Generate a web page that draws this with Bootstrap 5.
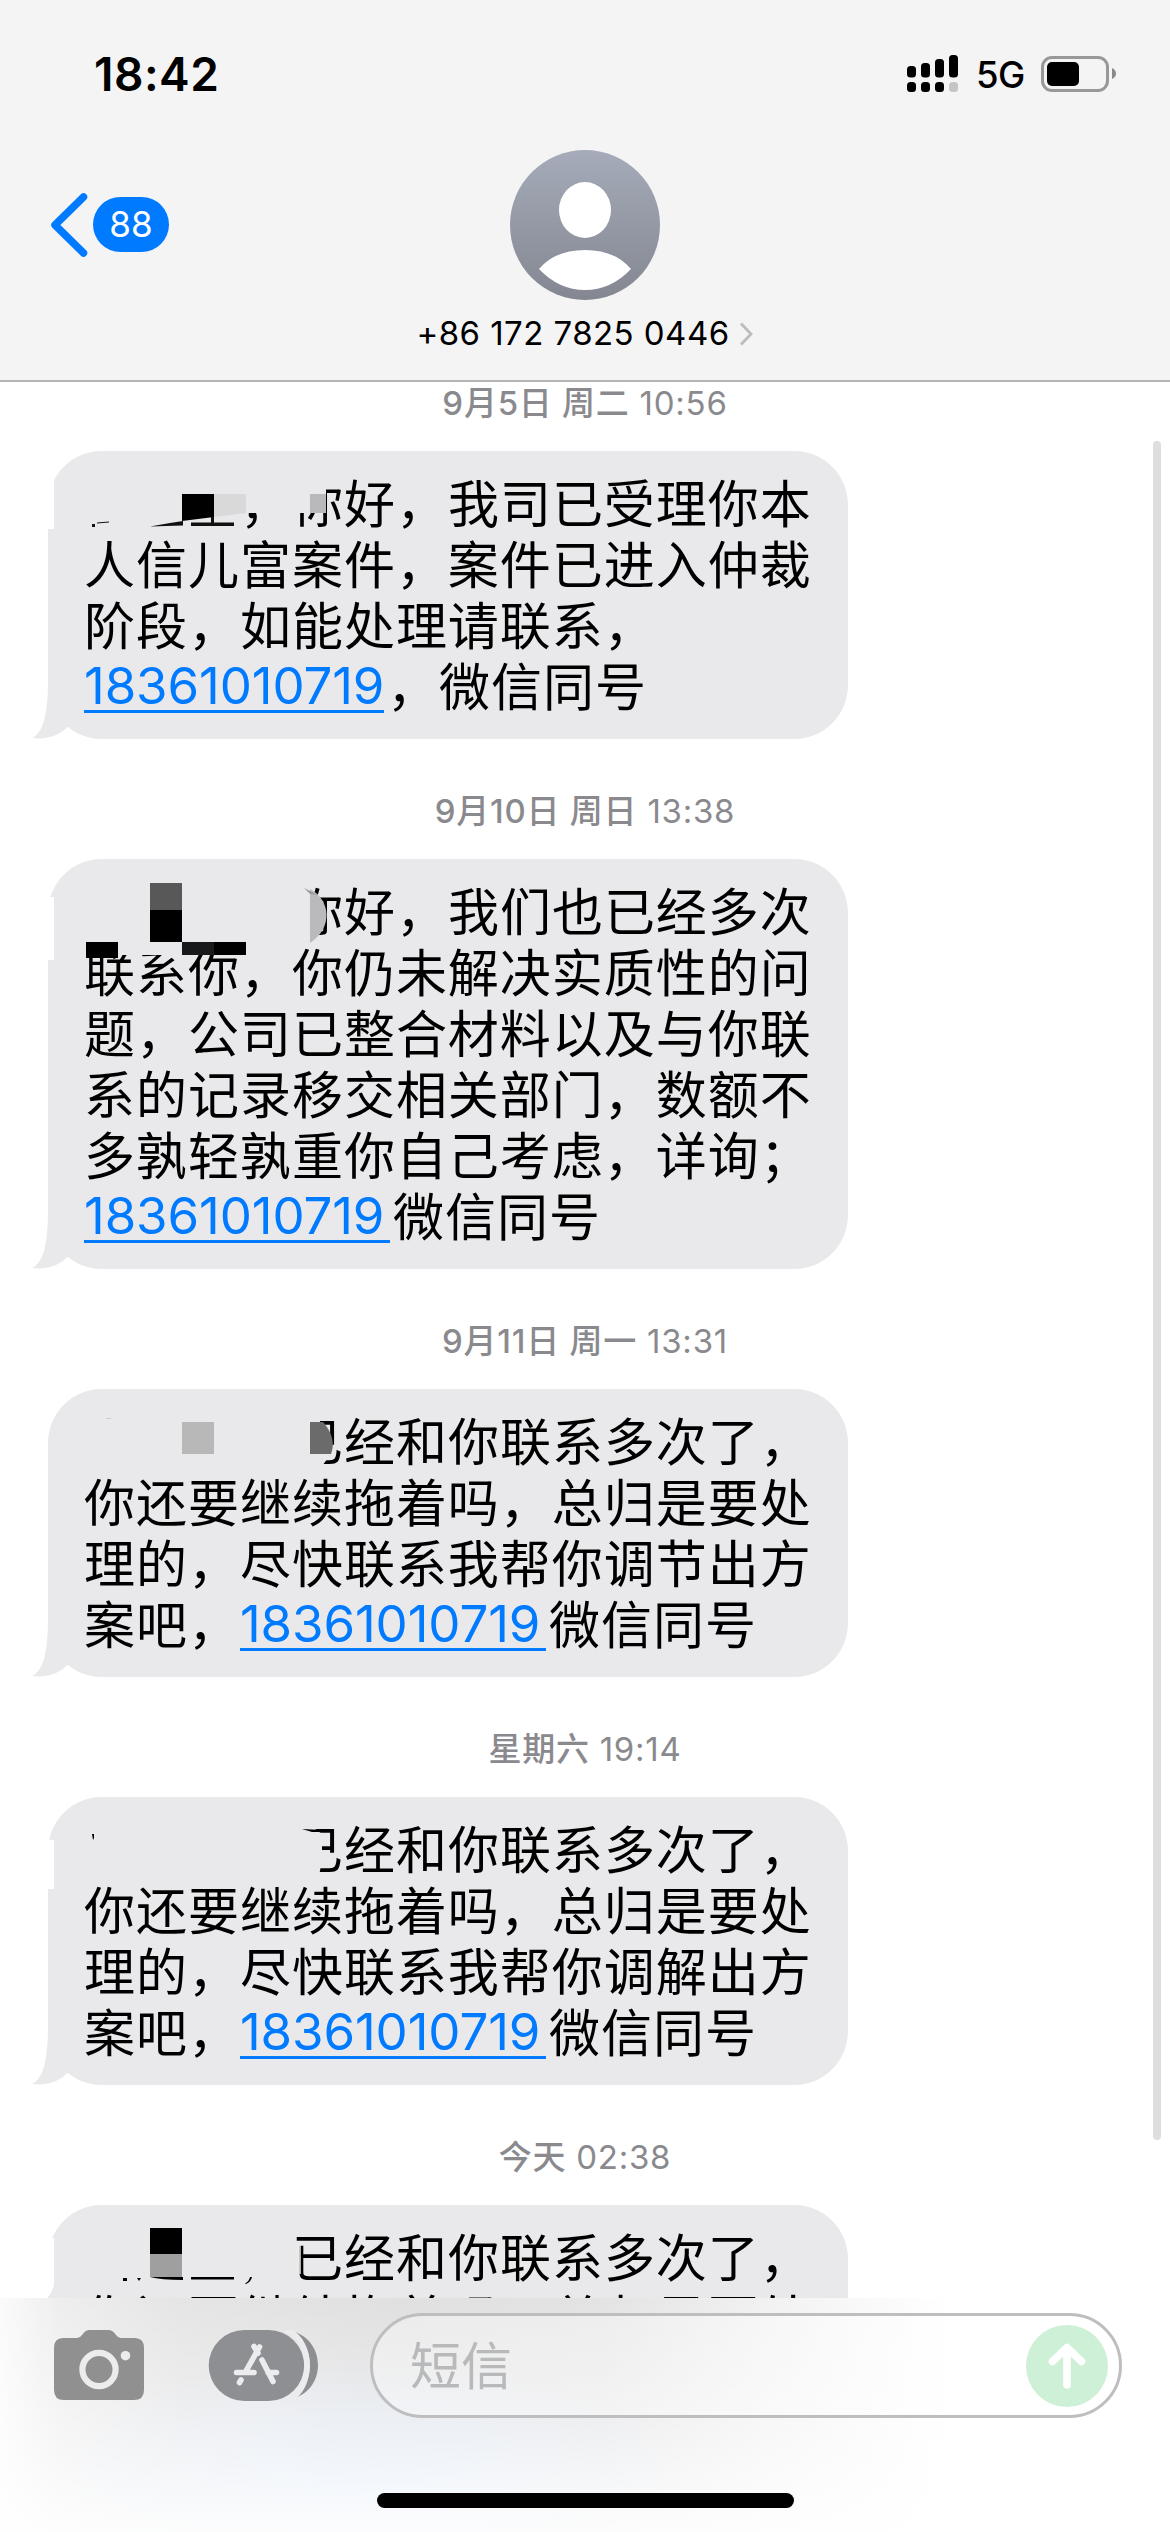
<!DOCTYPE html>
<html lang="zh-CN">
<head>
<meta charset="utf-8">
<meta name="viewport" content="width=device-width, initial-scale=1">
<title>信息</title>
<link href="https://cdn.jsdelivr.net/npm/bootstrap@5.3.0/dist/css/bootstrap.min.css" rel="stylesheet">
<script src="https://cdn.jsdelivr.net/npm/bootstrap@5.3.0/dist/js/bootstrap.bundle.min.js"></script>
<style>
  body { font-family: Inter, "Noto Sans CJK SC", sans-serif; color: #000; background: #fff; }
  .phone { width: 1170px; height: 2532px; }
  .top-area { height: 382px; background: #f4f4f5; border-bottom: 2px solid #b4b4b6; }
  .status-row { height: 150px; padding: 0 53px 2px 94px; }
  .clock { font-size: 46px; font-weight: 600; letter-spacing: .5px; line-height: 1; }
  .net { font-size: 36.5px; font-weight: 500; line-height: 1; margin: 2px 16px 0 17px; letter-spacing: -.4px; }
  .contact-row { height: 149px; padding: 0 50px; }
  .side { width: 320px; }
  .unread { width: 76px; height: 55px; font-size: 35px; font-weight: 400; background: #007aff; margin-left: 5px; padding: 0; }
  .number-row { height: 68px; font-size: 33px; line-height: 1; letter-spacing: .45px; padding-top: 1px; }
  .thread { height: 1916px; padding: 1px 0 0 48px; }
  .stamp { height: 40px; line-height: 40px; font-size: 33px; color: #8a8a8e; margin: 0 48px 28px 0; font-weight: 400; letter-spacing: .75px; }
  .stamp b { font-weight: 500; }
  .bubble { width: 800px; padding: 20px 0 24px 36px; margin-bottom: 52px; border-radius: 54px; background: #e9e9eb; font-size: 51px; line-height: 61px; letter-spacing: .98px; white-space: nowrap; font-family: "Noto Sans CJK SC", sans-serif; }
  .bubble a { font-family: Inter, sans-serif; color: #007aff; display: inline-block; width: 306px; height: 59px; line-height: 63px; letter-spacing: -.1px; border-bottom: 3px solid #007aff; text-decoration: none; vertical-align: top; margin-right: 3px; }
  .bubble a.short { width: 300px; }
  .redacted { display: inline-block; width: 156px; }
  .redacted.long { width: 208px; }
  .overlay { left: -16px; top: 0; pointer-events: none; }
  .thumb-bar { right: 9px; top: 441px; width: 8px; height: 1699px; background: #dedee0; }
  .composer { height: 234px; background:
      linear-gradient(to bottom, rgba(255,255,255,0) 0%, rgba(255,255,255,.25) 35%, rgba(255,255,255,.9) 100%),
      radial-gradient(ellipse 330px 130px at 370px 190px, rgba(218,234,255,.75), rgba(218,234,255,0)),
      linear-gradient(to right, #fbfbfb 0, #eeeeef 60px, #e5e5e6 180px, #e0e0e1 400px, #e3e3e4 600px, #f2f2f3 770px, #fff 950px); }
  .tools { padding: 15px 48px 0 54px; }
  .entry { width: 752px; height: 105px; border: 3px solid #bebec0; border-radius: 53px; padding: 0 11px 0 37px; margin-left: 52px; background: rgba(255,255,255,.35); }
  .hint { font-size: 51px; line-height: 1; color: #b8b9bb; font-family: "Noto Sans CJK SC", sans-serif; margin-top: -4px; }
  .home-bar { width: 417px; height: 15px; border-radius: 8px; background: #000; margin: 75px auto 0; }
</style>
</head>
<body>
<main class="phone position-relative overflow-hidden d-flex flex-column">
  <header class="top-area flex-shrink-0">
    <div class="status-row d-flex align-items-center justify-content-between">
      <span class="clock">18:42</span>
      <div class="d-flex align-items-center">
        <svg width="52" height="38" viewBox="907 56 52 38">
          <rect x="907" y="67" width="9" height="11.500" rx="3.500"/><rect x="921" y="64" width="9" height="14.500" rx="3.500"/><rect x="935" y="60" width="9" height="18.500" rx="3.500"/><rect x="949" y="56" width="9" height="22.500" rx="3.500"/>
          <rect x="907" y="83" width="9" height="10" rx="3.500"/><rect x="921" y="83" width="9" height="10" rx="3.500"/><rect x="935" y="83" width="9" height="10" rx="3.500"/><rect x="949" y="83" width="9" height="10" rx="3.500" fill="#c5c5c6"/>
        </svg>
        <span class="net">5G</span>
        <svg width="76" height="36" viewBox="1040 56 76 36">
          <rect x="1041.500" y="57.500" width="65" height="33" rx="9.500" fill="none" stroke="#98989a" stroke-width="3"/>
          <rect x="1046" y="62" width="32" height="24" rx="5"/><path d="M1111 68q4 2 4 5.500t-4 5.500z" fill="#8a8a8c"/>
        </svg>
      </div>
    </div>
    <div class="contact-row d-flex align-items-center justify-content-between">
      <div class="side d-flex align-items-center">
        <svg width="38" height="64" viewBox="0 0 38 64"><path d="M33.500 4L5 32l28.500 28" fill="none" stroke="#007aff" stroke-width="7.500" stroke-linecap="round" stroke-linejoin="round"/></svg>
        <span class="unread badge rounded-pill d-flex align-items-center justify-content-center">88</span>
      </div>
      <svg width="150" height="150" viewBox="0 0 150 150">
        <defs><linearGradient id="av" x1="0" y1="0" x2="0" y2="1"><stop offset="0" stop-color="#a5abb9"/><stop offset="1" stop-color="#848791"/></linearGradient></defs>
        <circle cx="75" cy="75" r="75" fill="url(#av)"/><ellipse cx="75" cy="60" rx="26" ry="28" fill="#fff"/>
        <path d="M29 119Q45 100 75 100t46 19Q101 140 75 140T29 119z" fill="#fff"/>
      </svg>
      <div class="side"></div>
    </div>
    <div class="number-row d-flex align-items-center justify-content-center">
      <span>+86 172 7825 0446</span>
      <svg class="ms-2" width="16" height="24" viewBox="0 0 16 24"><path d="M3 1.500L13 12 3 22.500" fill="none" stroke="#bcbcbf" stroke-width="2.800"/></svg>
    </div>
  </header>

  <section class="thread overflow-hidden flex-shrink-0">
    <div class="stamp text-center"><b>9月5日 周二</b> 10:56</div>
    <div class="bubble position-relative"><span class="redacted"></span>，你好，我司已受理你本<br>人信儿富案件，案件已进入仲裁<br>阶段，如能处理请联系，<br><a href="#" class="short">18361010719</a>，微信同号
      <svg class="overlay position-absolute" width="816" height="288" viewBox="32 451 816 288">
        <path d="M48 680C48 715 43 733 32 738C48 740 60 735 67 727L78 715V680z" fill="#e9e9eb"/>
        <path d="M48 450H66Q54 458 54 474V529H48z" fill="#fff"/>
        <path d="M238 478H326V513H238z" fill="#e9e9eb"/><path d="M310 494h16v19h-16z" fill="#b9b9bb"/>
        <path d="M182 494h32v23l-32 4z"/><path d="M214 494h32v19l-32 4z" fill="#d9d9da"/>
        <path d="M150 526.500L170 523l13-2v4.500zM191 522.500h43v3.500h-43zM211 517l3-.500v6h-3zM92 524h3v3h-3zM97 522.500l12-1v1l-12 1z" fill="#111"/>
      </svg>
    </div>

    <div class="stamp text-center"><b>9月10日 周日</b> 13:38</div>
    <div class="bubble position-relative"><span class="redacted long"></span>你好，我们也已经多次<br>联系你，你仍未解决实质性的问<br>题，公司已整合材料以及与你联<br>系的记录移交相关部门，数额不<br>多孰轻孰重你自己考虑，详询；<br><a href="#">18361010719</a>微信同号
      <svg class="overlay position-absolute" width="816" height="410" viewBox="32 859 816 410">
        <path d="M48 1210C48 1245 43 1263 32 1268C48 1270 60 1265 67 1257L78 1245V1210z" fill="#e9e9eb"/>
        <path d="M47 897H54V960H47z" fill="#fff"/>
        <path d="M84 880H310V944H250V955H84z" fill="#e9e9eb"/>
        <path d="M310 889C331 900 333 928 310 943z" fill="#bababc"/><path d="M304 888l14 7-8-1z" fill="#999"/>
        <path d="M150 883h32v27h-32z" fill="#585858"/><path d="M150 910h32v32h-32zM86 942h32v16H86zM214 942h32v13h-32z"/><path d="M182 942h32v13h-32z" fill="#18191b"/>
      </svg>
    </div>

    <div class="stamp text-center"><b>9月11日 周一</b> 13:31</div>
    <div class="bubble position-relative"><span class="redacted long"></span>已经和你联系多次了，<br>你还要继续拖着吗，总归是要处<br>理的，尽快联系我帮你调节出方<br>案吧，<a href="#">18361010719</a>微信同号
      <svg class="overlay position-absolute" width="816" height="288" viewBox="32 1389 816 288">
        <path d="M48 1618C48 1653 43 1671 32 1676C48 1678 60 1673 67 1665L78 1653V1618z" fill="#e9e9eb"/>
        <path d="M84 1410H320V1422Q336 1438 331 1454L322 1466H84z" fill="#e9e9eb"/>
        <path d="M182 1422h32v32h-32z" fill="#b8b8b9"/><path d="M310 1422h13Q337 1438 331 1454h-21z" fill="#6b6b6c"/>
        <path d="M106 1418h5v1h-5z" fill="#ccc"/>
      </svg>
    </div>

    <div class="stamp text-center"><b>星期六</b> 19:14</div>
    <div class="bubble position-relative"><span class="redacted long"></span>已经和你联系多次了，<br>你还要继续拖着吗，总归是要处<br>理的，尽快联系我帮你调解出方<br>案吧，<a href="#">18361010719</a>微信同号
      <svg class="overlay position-absolute" width="816" height="288" viewBox="32 1797 816 288">
        <path d="M48 2026C48 2061 43 2079 32 2084C48 2086 60 2081 67 2073L78 2061V2026z" fill="#e9e9eb"/>
        <path d="M47 1840H54V1889H47z" fill="#fff"/>
        <path d="M84 1818H300L322 1834V1860L319 1876H84z" fill="#e9e9eb"/>
        <path d="M302 1829l10 3h10v-2z M92 1834h2v4l-1 2z"/>
      </svg>
    </div>

    <div class="stamp text-center"><b>今天</b> 02:38</div>
    <div class="bubble position-relative"><span class="redacted long"></span>已经和你联系多次了，<br>你还要继续拖着吗，总归是要处
      <svg class="overlay position-absolute" width="816" height="200" viewBox="32 2205 816 200">
        <path d="M47 2238H54V2284Q52 2294 47 2298z" fill="#fff"/>
        <path d="M296 2243h5v31h-5z" fill="#e9e9eb" opacity=".75"/>
        <path d="M150 2228h32v26h-32zM150 2277h33v3q-22 0-33-3zM191 2277h43v2.500h-43zM245 2283.500q4-2 5-6.500h2q-1 5-6 7zM123 2278h4v3h-4zM137 2278h4l-2 3z"/><path d="M150 2254h32v23h-32z" fill="#9f9fa0"/>
      </svg>
    </div>
  </section>

  <footer class="composer flex-shrink-0">
    <div class="tools d-flex align-items-center">
      <svg width="90" height="72" viewBox="54 2331 90 72">
        <path d="M63 2339h14q3 0 5-3l2-2.500q2-2.500 5-2.500h20q3 0 5 2.500l2 2.500q2 3 5 3h14q9 0 9 10v42q0 10-10 10H64q-10 0-10-10v-42q0-10 9-10z" fill="#909091"/>
        <circle cx="99" cy="2370.500" r="16.600" fill="none" stroke="#ececed" stroke-width="6.200"/><circle cx="125.500" cy="2356.700" r="4.800" fill="#ececed"/>
      </svg>
      <svg class="flex-shrink-0" style="margin-left:64px" width="110" height="72" viewBox="208 2331 110 72">
        <path d="M294 2333C309 2337 318 2351 318 2366S309 2395 294 2399C304 2391 310 2380 310 2366S304 2341 294 2333z" fill="#8d8f92"/>
        <rect x="208.700" y="2331" width="95.500" height="71" rx="35.500" fill="#8d8f92"/>
        <path d="M286 2331C301 2336 307 2352 307 2366.500S301 2397 286 2402" fill="none" stroke="#ececee" stroke-width="5.500"/>
        <g stroke="#ececee" stroke-width="5.600" stroke-linecap="round" fill="none"><path d="M259.500 2348L246 2372M254 2347.500L258 2354M236.500 2373.500H254M268 2373.500h8.500M262 2361l11 21.500M241 2381l-1.500 2.500"/></g>
      </svg>
      <div class="entry flex-shrink-0 d-flex align-items-center justify-content-between">
        <span class="hint">短信</span>
        <svg width="82" height="82" viewBox="0 0 82 82"><circle cx="41" cy="41" r="41" fill="#cdf0d6"/><path d="M41 60V23M26.500 36.500L41 22.500l14.500 14" fill="none" stroke="#fff" stroke-width="7.600" stroke-linecap="round" stroke-linejoin="round"/></svg>
      </div>
    </div>
    <div class="home-bar"></div>
  </footer>
  <div class="thumb-bar position-absolute rounded-pill"></div>
</main>
</body>
</html>
